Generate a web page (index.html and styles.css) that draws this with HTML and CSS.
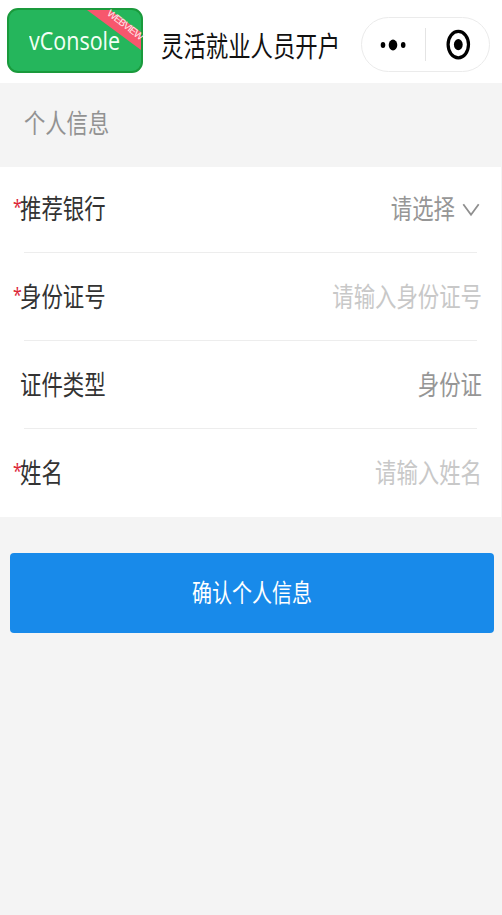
FILE: index.html
```
<!DOCTYPE html>
<html lang="zh-CN">
<head>
<meta charset="utf-8">
<title>灵活就业人员开户</title>
<link rel="stylesheet" href="styles.css">
</head>
<body>
<header class="nav">
  <div class="vconsole">
    <span class="vconsole-label">vConsole</span>
    <span class="ribbon"></span>
    <span class="ribbon-text">WEBVIEW</span>
  </div>
  <h1 class="title tall">灵活就业人员开户</h1>
  <div class="capsule">
    <svg class="dots" width="28" height="16" viewBox="0 0 28 16"><ellipse cx="4" cy="8" rx="2.3" ry="2.9"/><ellipse cx="14" cy="8" rx="4.3" ry="5.4"/><ellipse cx="24.2" cy="8" rx="2.3" ry="2.9"/></svg>
    <span class="divider"></span>
    <svg class="target" width="26" height="32" viewBox="0 0 26 32"><ellipse cx="13.3" cy="15.6" rx="10.2" ry="13.2" fill="none" stroke="#000" stroke-width="3.2"/><ellipse cx="13.3" cy="15.6" rx="4.4" ry="5.6"/></svg>
  </div>
</header>
<main>
  <h2 class="section"><span class="tall">个人信息</span></h2>
  <div class="form">
    <div class="row"><span class="star tall">*</span><span class="label tall">推荐银行</span><span class="value tall">请选择</span><svg class="chevron" width="18" height="14" viewBox="0 0 18 14"><path d="M1.3 1.3 L9 11.7 L16.7 1.3" fill="none" stroke="#8f8f8f" stroke-width="1.8"/></svg></div>
    <div class="row"><span class="star tall">*</span><span class="label tall">身份证号</span><span class="value placeholder tall">请输入身份证号</span></div>
    <div class="row"><span class="star"></span><span class="label tall">证件类型</span><span class="value tall">身份证</span></div>
    <div class="row"><span class="star tall">*</span><span class="label tall">姓名</span><span class="value placeholder tall">请输入姓名</span></div>
  </div>
  <button class="submit" type="button"><span class="tall">确认个人信息</span></button>
</main>
</body>
</html>
```
FILE: styles.css
```
* { box-sizing: border-box; }
body {
  margin: 0;
  min-height: 915px;
  background: #f4f4f4;
  font-family: "Noto Sans CJK SC", sans-serif;
}
/* Condensed, tall lettering used across the page */
.tall {
  display: inline-block;
  line-height: 30px;
  white-space: nowrap;
  transform: scaleY(1.25);
}
.nav {
  display: flex;
  align-items: flex-start;
  height: 83px;
  padding: 8px 0 0 7px;
  background: #fff;
}
.vconsole {
  position: relative;
  width: 136px;
  height: 65px;
  border: 2px solid #1a9a3c;
  border-radius: 11px;
  background: #25b65c;
}
.vconsole-label {
  display: block;
  width: 92px;
  margin: 16px 0 0 20px;
  color: #f4fff6;
  font: 21.5px/30px "Open Sans", sans-serif;
  transform: scaleY(1.16);
}
.ribbon {
  position: absolute;
  top: 0;
  right: 0;
  width: 54px;
  height: 40px;
  border-top-right-radius: 9px;
  background: #f7576d;
  clip-path: polygon(0 0, 23px 0, 54px 22px, 54px 40px);
}
.ribbon-text {
  position: absolute;
  left: 92px;
  top: 9px;
  width: 48px;
  color: #ffe9ec;
  font: 10px/12px "Liberation Sans", sans-serif;
  letter-spacing: -0.9px;
  text-align: center;
  transform: rotate(38deg);
}
.title {
  width: 179px;
  margin: 21px 0 0 18px;
  color: #111;
  font-size: 22.4px;
  font-weight: 400;
}
.capsule {
  display: flex;
  align-items: center;
  width: 129px;
  height: 55px;
  margin: 9px 0 0 21px;
  padding-left: 17px;
  border: 1px solid #ebebeb;
  border-radius: 28px;
}
.divider {
  width: 1px;
  height: 33px;
  margin: 0 19px 0 18px;
  background: #e4e4e4;
}
.section {
  display: flex;
  align-items: center;
  height: 84px;
  margin: 0;
  padding: 0 0 6px 24px;
  color: #929292;
  font-size: 21.3px;
  font-weight: 400;
}
.form {
  width: 501px;
  background: #fff;
}
.row {
  position: relative;
  display: flex;
  align-items: center;
  height: 88px;
  padding: 0 19px 2px 13px;
  font-size: 21.4px;
}
.row:first-child {
  height: 86px;
  padding-right: 20px;
  padding-bottom: 4px;
}
.row:not(:last-child)::after {
  content: "";
  position: absolute;
  left: 24px;
  right: 24px;
  bottom: 0;
  height: 1px;
  background: #ededed;
}
.star {
  width: 7px;
  margin-bottom: 5px;
  color: #dc2638;
  font-family: "Noto Sans", sans-serif;
  font-size: 16px;
}
.label { color: #333; }
.value {
  margin-left: auto;
  color: #969696;
}
.placeholder { color: #c8c8c8; }
.chevron { margin: 3px 1px 0 7px; }
.submit {
  display: flex;
  align-items: center;
  justify-content: center;
  width: 484px;
  height: 80px;
  margin: 36px 0 0 10px;
  padding: 0 0 3px;
  border: 0;
  border-radius: 4px;
  background: #188aea;
  color: #fff;
  font-family: inherit;
  font-size: 20px;
}
```
